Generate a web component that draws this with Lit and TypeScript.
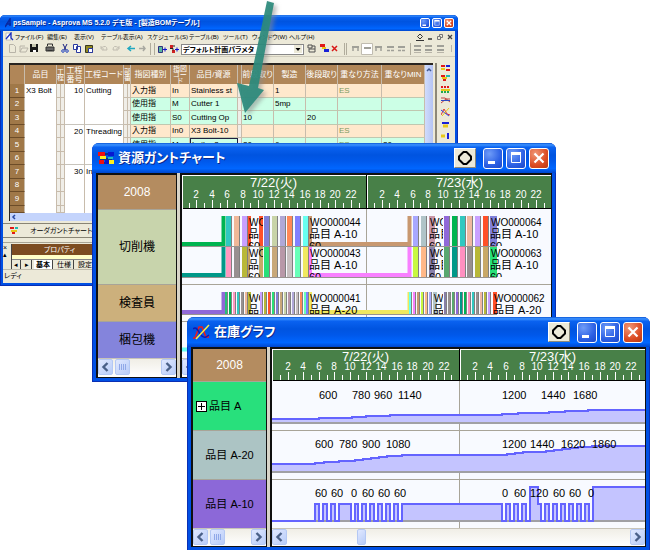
import { LitElement, html, svg, css, nothing } from "lit";
import { customElement, property } from "lit/decorators.js";
import { classMap } from "lit/directives/class-map.js";
import { styleMap } from "lit/directives/style-map.js";

const controls = css`
  button {
    font: inherit;
    padding: 0;
    margin: 0;
    border: 0;
    background: none;
    display: grid;
    place-items: center;
    box-sizing: border-box;
  }
`;

/** Top-level window with a blue caption bar. */
@customElement("xp-window")
class XpWindow extends LitElement {
  @property() caption = "";
  @property({ type: Boolean, reflect: true }) small = false;

  static styles = [
    controls,
    css`
      :host {
        display: block;
        box-sizing: border-box;
        padding: 0 4px 4px;
        border-radius: 7px 7px 0 0;
        background: #0050e4;
        box-shadow: inset 1px -1px 0 #0a2fb4, inset -1px 0 0 #0a2fb4;
      }
      :host([small]) {
        padding: 0 3px 3px;
        border-radius: 5px 5px 0 0;
      }
      .caption {
        display: flex;
        align-items: center;
        gap: 3px;
        height: 30px;
        margin: 0 -4px;
        padding: 0 7px 0 6px;
        border-radius: 7px 7px 0 0;
        background: linear-gradient(#0a56d6 0, #3c92ff 6%, #0a62f0 14%, #0054e0 40%, #0058ea 60%, #0066ff 85%, #0046cc 100%);
        color: #fff;
      }
      h1 {
        flex: 1;
        min-width: 0;
        margin: 0;
        padding-left: 1px;
        overflow: hidden;
        white-space: nowrap;
        font: bold 13px/18px "Liberation Sans", "Noto Sans CJK JP", sans-serif;
        font-feature-settings: "palt";
        text-shadow: 1px 1px 0 #0a2a8c;
      }
      .btn {
        width: 20px;
        height: 21px;
        border: 1px solid #fff;
        border-radius: 3px;
        background: radial-gradient(circle at 30% 25%, #6f9cf8, #2c60e4 60%, #1c48c8);
      }
      .close {
        background: radial-gradient(circle at 30% 25%, #f09878, #dc4c24 60%, #b83810);
      }
      .dock {
        width: 22px;
        height: 20px;
        margin-right: 4px;
        background: #ece9d8;
        border: 1px solid;
        border-color: #fff #8c8a7c #8c8a7c #fff;
      }
      svg {
        display: block;
      }
      :host([small]) .caption {
        height: 16px;
        margin: 0 -3px;
        padding: 0 4px 0 5px;
        gap: 2px;
        border-radius: 5px 5px 0 0;
      }
      :host([small]) h1 {
        font-size: 7px;
        line-height: 12px;
        padding-left: 0;
      }
      :host([small]) .btn {
        width: 10px;
        height: 10px;
        border-radius: 2px;
      }
      :host([small]) .btn svg {
        width: 8px;
        height: 8px;
      }
    `,
  ];

  render() {
    return html`
      <header class="caption">
        <slot name="icon"></slot>
        <h1>${this.caption}</h1>
        ${this.small
          ? nothing
          : html`<button class="dock" aria-label="Dock">
              <svg width="16" height="16" viewBox="0 0 16 16"><path d="M6.500 2h3L14 6.500v3L9.500 14h-3L2 9.500v-3Z" fill="none" stroke="#000" stroke-width="2" /></svg>
            </button>`}
        <button class="btn" aria-label="Minimize">
          <svg width="16" height="16" viewBox="0 0 16 16"><path d="M3 12.500h7" stroke="#fff" stroke-width="3" /></svg>
        </button>
        <button class="btn" aria-label="Maximize">
          <svg width="16" height="16" viewBox="0 0 16 16"><path d="M3.500 3v9.500h9V3" fill="none" stroke="#fff" /><path d="M3 3.500h10" stroke="#fff" stroke-width="3" /></svg>
        </button>
        <button class="btn close" aria-label="Close">
          <svg width="16" height="16" viewBox="0 0 16 16"><path d="M3.500 3.500l9 9M12.500 3.500l-9 9" stroke="#fff" stroke-width="2.200" /></svg>
        </button>
      </header>
      <slot></slot>
    `;
  }
}

type Bar = [x: number, width: number, color: string];
type Label = [x: number, text: string];
type Point = [x: number, y: number];

/* Work-order bars; x is measured from the left edge of the gantt canvas. */
const wide = (start: number, colors: string[]): Bar[] =>
  colors.map((c, i) => [start + Math.round(i * 7.75), 6, c]);
const thin = (start: number, colors: string[]): Bar[] => colors.map((c, i) => [start + i * 4, 3, c]);

interface Lane {
  y: number;
  height: number;
  lead: string;
  carry: string;
  bars: Bar[];
  tags: { x: number; width: number; fill: Bar[]; order: string; item: string }[];
}

const lanes: Lane[] = [
  {
    y: 7, height: 30, lead: "#00b450", carry: "#c89870",
    bars: [
      ...wide(44, ["#30c8c0", "#f0b898", "#c8a0ff"]),
      ...wide(82, ["#8080d8", "#c8d4a8", "#b0a8d8", "#ff8858", "#8080ff", "#68fff0"]),
      ...wide(231, ["#a8a8ff", "#b0c4c8"]),
      ...wide(262, ["#9068d8", "#00b450", "#30c8c0", "#f0b8a0", "#c8a0ff", "#ff5028"]),
    ],
    tags: [
      { x: 66, width: 15, fill: [[66, 3, "#ff5028"], [77, 4, "#ff5028"]], order: "WO", item: "品" },
      { x: 127, width: 70, fill: [[127, 3, "#c89870"]], order: "WO000044", item: "品目 A-10" },
      { x: 247, width: 14, fill: [[247, 6, "#c898a8"]], order: "WO", item: "品目" },
      { x: 308, width: 62, fill: [[308, 7, "#8080d8"]], order: "WO000064", item: "品目 A-10" },
    ],
  },
  {
    y: 38, height: 30, lead: "#009888", carry: "#f880ff",
    bars: [
      ...wide(44, ["#ff98c0", "#989090", "#b8b838"]),
      ...wide(82, ["#28e078", "#c8a878", "#b898a8", "#c8c0c0", "#68ffb8", "#f0e860"]),
      ...wide(231, ["#c8f840", "#ffb888"]),
      ...wide(262, ["#58a870", "#009888", "#ff90c0", "#989090", "#b8b838", "#c8a868"]),
    ],
    tags: [
      { x: 66, width: 15, fill: [[66, 2, "#c8a868"], [77, 4, "#c8a868"]], order: "WO", item: "品" },
      { x: 127, width: 70, fill: [[127, 3, "#f880ff"]], order: "WO000043", item: "品目 A-10" },
      { x: 247, width: 14, fill: [[247, 6, "#8880a8"]], order: "WO", item: "品目" },
      { x: 308, width: 62, fill: [[308, 7, "#28e078"]], order: "WO000063", item: "品目 A-10" },
    ],
  },
  {
    y: 83, height: 22, lead: "#9068d8", carry: "#f0e860",
    bars: [
      ...thin(43, ["#28c078", "#00b450", "#ff98c0", "#30c8c0", "#989090", "#f0b898"]),
      ...thin(78, ["#c8a0ff", "#b8b838", "#ff5028", "#28e078", "#8080d8", "#c8a878", "#c8d4a8", "#b898a8", "#b0a8d8", "#c8c0c0", "#ff8858", "#68ffb8"]),
      [124, 3, "#8080ff"],
      ...thin(227, ["#68fff0", "#f880ff", "#c89870", "#c8f840", "#ffb888", "#a8a8ff"]),
      ...thin(262, ["#8880a8", "#989090", "#58a870", "#9068d8", "#009888", "#00b450", "#ff90c0", "#30c8c0", "#989090", "#f0b8a0", "#b8b838", "#c8a0ff"]),
    ],
    tags: [
      { x: 66, width: 12, fill: [[66, 3, "#b8b838"]], order: "WO", item: "品" },
      { x: 127, width: 70, fill: [[127, 3, "#f0e860"]], order: "WO000041", item: "品目 A-20" },
      { x: 251, width: 10, fill: [[251, 4, "#b0c4c8"]], order: "WO", item: "品目" },
      { x: 311, width: 60, fill: [[311, 4, "#ff5028"]], order: "WO000062", item: "品目 A-20" },
    ],
  },
];

interface Stock {
  base: number;
  textY: number;
  labels: Label[];
  start: number;
  steps: Point[];
}

const pulses = (from: number, until: number): Point[] => {
  const out: Point[] = [];
  for (let x = from; x < until; x += 8) out.push([x, 123], [x + 4, 140]);
  return out;
};

/* Each step is [x, new level]. */
const stocks: Stock[] = [
  {
    base: 42, textY: 18, start: 38,
    labels: [[47, "600"], [80, "780"], [102, "960"], [126, "1140"], [230, "1200"], [269, "1440"], [301, "1680"]],
    steps: [[47, 37], [80, 36], [94, 35], [118, 34], [230, 33], [246, 32], [277, 31], [293, 30], [316, 29]],
  },
  {
    base: 91, textY: 67, start: 83,
    labels: [[43, "600"], [67, "780"], [90, "900"], [114, "1080"], [230, "1200"], [258, "1440"], [289, "1620"], [320, "1860"]],
    steps: [[43, 82], [52, 81], [67, 80], [83, 79], [91, 78], [99, 77], [107, 76], [115, 75], [130, 74], [235, 73], [243, 72], [251, 71], [274, 70], [282, 69], [290, 68], [298, 67], [306, 66], [320, 65]],
  },
  {
    base: 140, textY: 116, start: 140,
    labels: [[43, "60"], [59, "60"], [79, "0"], [90, "60"], [106, "60"], [122, "60"], [230, "0"], [242, "60"], [258, "120"], [281, "60"], [297, "60"], [316, "0"]],
    steps: [
      ...pulses(43, 67), [67, 123], [79, 140], [83, 123], [86, 140],
      ...pulses(90, 130), [130, 123], [230, 140],
      ...pulses(234, 258), [258, 106], [266, 123], [269, 140],
      ...pulses(273, 321), [321, 106],
    ],
  },
];

const LONG = 1200;

const trace = (s: Stock) =>
  `M-2 ${s.start}` + s.steps.map(([x, y]) => `H${x}V${y}`).join("") + `H${LONG}`;

@customElement("app-root")
class AppRoot extends LitElement {
  static styles = [
    controls,
    css`
      :host {
        display: grid;
        grid-template-columns: minmax(0, 1fr);
        overflow: hidden;
        min-height: 100vh;
        background: #fff;
        font: 12px/14px "Liberation Sans", "Noto Sans CJK JP", sans-serif;
        color: #000;
      }
      svg {
        display: block;
        flex: none;
      }
      .layer {
        grid-area: 1 / 1;
        align-self: start;
      }
      .main {
        margin: 15px 192px 0 0;
      }
      .gantt {
        margin: 143px 94px 0 92px;
      }
      .stock {
        margin: 317px 0 0 187px;
      }
      .arrow {
        margin-left: 230px;
        justify-self: start;
        filter: drop-shadow(3px 3px 2px #8889);
      }

      /* gantt and stock panes */
      .panes {
        display: grid;
        grid-template-columns: 81px minmax(0, 1fr);
        column-gap: 3px;
        background: #d8d4c8;
      }
      .stock .panes {
        grid-template-columns: 76px minmax(0, 1fr);
      }
      .pane {
        overflow: hidden;
        border: solid #101010;
        border-width: 2px 1px 1px 2px;
        background: #f8faff;
      }
      .year,
      .res {
        display: flex;
        align-items: center;
        justify-content: center;
        box-sizing: border-box;
      }
      .year {
        height: 34px;
        background: #b48c60;
        color: #fff;
        font-size: 12px;
      }
      .stock .year {
        height: 32px;
      }
      .res {
        height: 37px;
        gap: 2px;
        border-top: 1px solid #a8a498;
        font-size: 12px;
      }
      .tall {
        height: 75px;
      }
      .item {
        height: 49px;
        font-size: 11px;
      }
      .left {
        justify-content: flex-start;
        padding-left: 3px;
      }
      .expand {
        width: 11px;
        height: 11px;
        border: 1px solid #000;
        background: #fff;
      }
      .axis {
        background: #488048;
        box-shadow: inset 1px 1px 0 #fff, inset 0 -1px 0 #000;
      }
      .day {
        font-size: 13px;
        fill: #fff;
      }
      .hour {
        font-size: 10px;
        fill: #fff;
        text-anchor: middle;
      }
      .num {
        font-size: 11px;
      }
      .order {
        font-size: 10px;
      }
      .scroll {
        display: flex;
        height: 18px;
        box-sizing: border-box;
        border-top: 1px solid #c8c4b8;
        background: linear-gradient(#f0eee6, #fff);
      }
      .gantt .scroll {
        height: 19px;
      }
      .sb,
      .thumb {
        width: 15px;
        height: 16px;
        border: 1px solid #b4c8f4;
        border-radius: 2px;
        background: linear-gradient(135deg, #e0e8ff, #b8ccf8);
      }
      .thumb {
        margin-left: 2px;
      }
      .far {
        width: 9px;
        margin-left: 70px;
      }
      .end {
        margin-left: auto;
      }

      /* main table window */
      .client {
        background: #ece9d8;
        font-size: 8px;
        line-height: 10px;
      }
      .menu {
        display: flex;
        align-items: center;
        height: 11px;
        padding-left: 2px;
        white-space: nowrap;
        font-size: 6px;
        font-feature-settings: "palt";
      }
      .menu ul {
        display: grid;
        grid-template-columns: 32px 27px 27px 46px 42px 34px 29px 37px 30px;
        margin: 0 auto 0 1px;
        padding: 0;
        list-style: none;
      }
      .mdi {
        display: flex;
        gap: 4px;
        padding-right: 2px;
      }
      .tools {
        display: flex;
        align-items: center;
        height: 14px;
        overflow: hidden;
        border-bottom: 1px solid #d0ccbc;
      }
      .tools select {
        flex: none;
        appearance: none;
        box-sizing: border-box;
        width: 123px;
        height: 11px;
        margin: 0;
        padding: 0 1px;
        border: 1px solid #888;
        border-radius: 0;
        background: #fff;
        color: #000;
        font: bold 7px/9px "Liberation Sans", "Noto Sans CJK JP", sans-serif;
        font-feature-settings: "palt";
      }
      .combo {
        display: flex;
        align-items: center;
      }
      .drop {
        margin-left: -10px;
        pointer-events: none;
      }
      .work {
        display: flex;
        padding: 6px 0 2px 6px;
      }
      .sheet {
        flex: 1;
        min-width: 0;
        overflow: hidden;
        border: solid #282420;
        border-width: 2px 0 0 1px;
      }
      .grid {
        display: flex;
        background: #fff;
      }
      .vbar {
        width: 8px;
        margin-left: auto;
        background: linear-gradient(90deg, #d0dcfc, #b4c4f4);
      }
      .vbar svg {
        margin-top: 1px;
      }
      .side {
        width: 14px;
        margin-left: 2px;
        padding-left: 4px;
        border-left: 2px solid #8c8878;
      }
      .hbar {
        display: flex;
        align-items: center;
        height: 8px;
        background: #c4d4fc;
      }
      table {
        flex: none;
        table-layout: fixed;
        width: 415px;
        border-spacing: 0;
      }
      th,
      td {
        box-sizing: border-box;
        padding: 0 1px;
        overflow: hidden;
        white-space: nowrap;
        font-weight: normal;
        text-align: left;
        border-right: 1px solid #c8bcac;
      }
      thead th {
        height: 19px;
        background: #b08658;
        color: #fff;
        text-align: center;
        line-height: 9px;
        padding: 0;
        font-feature-settings: "palt";
      }
      thead .wrap {
        white-space: normal;
        word-break: break-all;
      }
      thead .three {
        font-size: 7px;
        line-height: 6px;
      }
      tbody tr {
        height: 14px;
      }
      tbody tr:nth-child(even) {
        height: 13px;
      }
      tbody tr.cut {
        height: 7px;
        line-height: 6px;
      }
      tbody th {
        background: #a07848;
        color: #fff;
        text-align: center;
        border-bottom: 1px solid #6c4c28;
      }
      .t {
        background: #f0eee8;
        border-bottom: 1px solid #c8bcac;
      }
      .r {
        text-align: right;
      }
      .g {
        border-bottom: 1px solid #c8c4bc;
      }
      .in td.c {
        background: #ffe8cc;
      }
      .use td.c {
        background: #ccffe6;
      }
      td.c {
        border-bottom: 1px solid #c0c8b0;
      }
      td.es {
        color: #7c9860;
      }
      td.sel {
        border: 1px solid #202040;
      }
      .bottomtab {
        display: flex;
        align-items: center;
        gap: 12px;
        height: 13px;
        padding-left: 7px;
        border-top: 1px solid #888474;
        border-bottom: 1px solid #888474;
        font-size: 7px;
        font-feature-settings: "palt";
      }
      .dockrow {
        display: flex;
        margin-top: 4px;
        padding-top: 1px;
        border-top: 1px solid #a8a494;
      }
      .grip {
        width: 8px;
        line-height: 7px;
        font-size: 7px;
      }
      .props {
        flex: 1;
        border-left: 1px solid #444;
      }
      .props h2 {
        height: 11px;
        margin: 0;
        padding-left: 32px;
        background: #7c4c20;
        color: #fff;
        font: 7px/11px "Liberation Sans", "Noto Sans CJK JP", sans-serif;
        font-feature-settings: "palt";
      }
      .value {
        height: 4px;
        background: #ffffc8;
        border-bottom: 1px solid #888;
      }
      .tabs {
        display: flex;
        gap: 2px;
        height: 9px;
        font-size: 7px;
        line-height: 9px;
      }
      .tabs button {
        line-height: 9px;
        padding: 0 2px;
        border-right: 1px solid #444;
      }
      .tabs .on {
        background: #fff;
        font-weight: bold;
      }
      .status {
        height: 13px;
        padding-left: 1px;
        border-top: 1px solid #c0bcac;
        font-size: 7px;
        line-height: 12px;
        font-feature-settings: "palt";
      }
    `,
  ];

  private axis(origin: number, hourWidth: number, height: number) {
    const hours = Array.from({ length: 47 }, (_, i) => i + 1).filter((h) => h !== 24);
    const split = Math.round(origin + 24 * hourWidth);
    return html`<svg class="axis" width="1200" height=${height}>
      ${hours.map((h) => {
        const x = Math.round(origin + h * hourWidth);
        return svg`<path d="M${x + 0.5} ${height - 1}v${h % 2 ? -5 : -8}" stroke="#fff" />
          ${h % 2 ? nothing : svg`<text class="hour" x=${x} y=${height - 11}>${h % 24}</text>`}`;
      })}
      <path d="M${split}.5 0V${height}" stroke="#000" /><path d="M${split + 1}.5 0V${height - 1}" stroke="#fff" />
      <text class="day" x=${Math.round(origin + 9 * hourWidth)} y="12">7/22(火)</text>
      <text class="day" x=${Math.round(origin + 33 * hourWidth)} y="12">7/23(水)</text>
    </svg>`;
  }

  private ganttChart() {
    return html`<svg width="1200" height="149">
      <path d="M184.500 0V149M0 75.500H1200M0 112.500H1200" stroke="#a8a498" />
      ${lanes.map(
        (l) => svg`
        <path d="M-2 ${l.y + l.height - 2}H41.500V${l.y}" fill="none" stroke=${l.lead} stroke-width="4" />
        <path d="M127 ${l.y + l.height - 2}H227.500V${l.y}" fill="none" stroke=${l.carry} stroke-width="4" />
        <path d="M0 ${l.y + l.height + 0.5}H315" stroke="#989490" />
        ${l.bars.map(([x, w, c]) => svg`<rect x=${x} y=${l.y} width=${w} height=${l.height} fill="#808080" /><rect x=${x} y=${l.y} width=${w - 1} height=${l.height} fill=${c} />`)}
        ${l.tags.map(
          (t) => svg`
          ${t.fill.map(([x, w, c]) => svg`<rect x=${x} y=${l.y} width=${w} height=${l.height} fill=${c} />`)}
          <svg x=${t.x} y=${l.y} width=${t.width} height=${l.height} overflow="hidden">
            <text class="order" x="1" y="10">${t.order}</text>
            <text class="num" x="0" y="22">${t.item}</text>
            ${l.height > 25 ? svg`<text class="num" x="0" y="34">60</text>` : nothing}
          </svg>`
        )}`
      )}
      <path d="M0 140.500H60" stroke="#68fff0" stroke-width="4" />
    </svg>`;
  }

  private stockChart() {
    return html`<svg width="1200" height="147">
      <path d="M187.500 0V147M0 49.500H1200M0 98.500H1200" stroke="#a8a498" />
      ${stocks.map(
        (s) => svg`
        <path d="${trace(s)}V${s.base}H-2Z" fill="#c4c4ff" />
        <path d="M0 ${s.base}H1200" stroke="#a0a0a4" stroke-width="2" />
        <path d=${trace(s)} fill="none" stroke="#6464ff" stroke-width="2" />
        ${s.labels.map(([x, t]) => svg`<text class="num" x=${x} y=${s.textY}>${t}</text>`)}`
      )}
    </svg>`;
  }

  private chevron(right = false) {
    return html`<svg width="9" height="10" viewBox="0 0 9 10"><path d=${right ? "M2.500 1l4 4l-4 4" : "M6.500 1l-4 4l4 4"} fill="none" stroke="#4a6088" stroke-width="2.400" /></svg>`;
  }

  private scrollbar(far = false) {
    return html`<div class="scroll">
      <button class="sb" aria-label="Scroll left">${this.chevron()}</button>
      <button class=${classMap({ thumb: true, far })} aria-label="Scroll position">
        ${far ? nothing : html`<svg width="8" height="8"><path d="M.5 1v6M2.500 1v6M4.500 1v6M6.500 1v6" stroke="#90a8e8" /></svg>`}
      </button>
      <button class="sb end" aria-label="Scroll right">${this.chevron(true)}</button>
    </div>`;
  }

  private tableRow(n: number) {
    const rows: Record<number, string[]> = {
      1: ["入力指", "In", "Stainless st", "", "1", "", "ES", ""],
      2: ["使用指", "M", "Cutter 1", "", "5mp", "", "", ""],
      3: ["使用指", "S0", "Cutting Op", "10", "", "20", "", ""],
      4: ["入力指", "In0", "X3 Bolt-10", "", "", "", "ES", ""],
      5: ["使用指", "M", "Lathe 2", "20", "6", "", "ES", "20"],
    };
    const process: Record<number, [string, string]> = { 1: ["10", "Cutting"], 4: ["20", "Threading"], 7: ["30", "Inspection"] };
    const last = n === 3 || n === 6;
    const d = rows[n] ?? ["", "", "", "", "", "", "", ""];
    const [no, code] = process[n] ?? ["", ""];
    return html`<tr class=${classMap({ in: n === 1 || n === 4, use: n < 6 && n !== 1 && n !== 4, cut: n === 10 })}>
      <th scope="row">${n < 10 ? n : ""}</th>
      <td>${n === 1 ? "X3 Bolt" : ""}</td>
      <td class="t"></td><td class="t"></td>
      <td class=${classMap({ r: true, g: last })}>${no}</td>
      <td class=${classMap({ g: last })}>${code}</td>
      <td class="t"></td><td class="t"></td>
      ${d.map((v, i) => html`${i === 3 ? html`<td class="t"></td>` : nothing}<td class=${classMap({ c: true, es: v === "ES", sel: n === 5 && i === 2 })}>${v}</td>`)}
    </tr>`;
  }

  private toolbar() {
    return html`<div class="tools">
      <svg width="178" height="12" viewBox="4 43 178 12" fill="none">
        <path d="M10.500 44.500h4l2 2v6h-6zM21 52l2-4h6l-2 4zM21 52v-6h5" stroke="#b8b4a8" />
        <path d="M31 44h8v8h-8z" fill="#181818" /><path d="M33 44h4v3h-4z" fill="#c8c8b0" /><path d="M34 50h3v2h-3z" fill="#fff" />
        <path d="M47 47h8v4h-8z" fill="#686868" stroke="#303030" /><path d="M48.500 46v-2h5v2M48.500 50.500h5" stroke="#303030" />
        <path d="M64 44l3 6M68 44l-3 6" stroke="#182080" /><circle cx="64" cy="51" r="1.300" stroke="#2848c0" /><circle cx="68" cy="51" r="1.300" stroke="#2848c0" />
        <path d="M74.500 44.500h4v5h-4zM77.500 46.500h4v6h-4z" fill="#fff" stroke="#2838a0" />
        <path d="M86.500 45.500h7v7h-7z" fill="#908820" stroke="#383820" /><path d="M89.500 48.500h4v4h-4z" fill="#fff" stroke="#2838a0" />
        <path d="M102 46v3h3M102 48q6-4 6 2h-5M120 46v3h-3M120 48q-6-4-6 2h5" stroke="#c0bcb0" />
        <path d="M129 48.500h7M132 46l-3 2.500l3 2.500" stroke="#20a8c0" stroke-width="1.500" />
        <path d="M140 48.500h6M144 46l2 2.500l-2 2.500" stroke="#a8a8a0" stroke-width="1.500" />
        <path d="M151.500 43v12M155.500 43v12" stroke="#b0ac9c" />
        <path d="M159.500 46.500h4v6h-4z" fill="#58b8a0" stroke="#303080" /><path d="M164 49.500h4M166 47.500v4" stroke="#1010d0" />
        <path d="M171 45h3v3h-3zM173 50h3v3h-3z" fill="#d02020" /><path d="M171 48.500h3v2M174 46h2" stroke="#202020" /><path d="M176 49.500h4M178 47.500v4" stroke="#1010d0" />
      </svg>
      <label class="combo">
        <select aria-label="計画パラメタ"><option>デフォルト計画パラメタ</option></select>
        <svg class="drop" width="8" height="8"><path d="M0 0h8v8H0z" fill="#ece9d8" /><path d="M1.500 3h5l-2.500 3z" fill="#000" /></svg>
      </label>
      <svg width="150" height="12" viewBox="305 43 150 12" fill="none">
        <path d="M311 45h4v3h-4zM315 46h3v6h-6v-3h6" stroke="#505050" />
        <path d="M323 44h5v3h-5z" fill="#e01818" /><path d="M325 47h4v2h-4z" fill="#e8c818" /><path d="M327 49h5v3h-5z" fill="#1820d8" />
        <path d="M335 46l5 5M340 46l-5 5" stroke="#d81818" stroke-width="1.500" />
        <path d="M347.500 43v12M349.500 43v12M413.500 43v12" stroke="#b0ac9c" />
        <path d="M364.500 43.500h11v11h-11z" fill="#fff" stroke="#c0bcb0" />
        <g stroke="#a0a098" stroke-width="2">
          <path d="M355 47h7M367 48h7M378 47h7M390 47h7M401 47h7" /><path d="M417 46h7M428 46h7M440 46h7M417 50h7M428 50h7M440 50h7" />
          <path d="M356 51v-3M361 51v-3M379 51v-3M384 51v-3M390 50.500h3M394 50.500h3M401 50.500h3M405 50.500h3" stroke-width="1.500" />
        </g>
        <path d="M417 52.500h7M428 52.500h7M440 52.500h7M454.500 45v7" stroke="#b8b4a8" />
      </svg>
    </div>`;
  }

  private mainWindow() {
    const menu = ["ファイル(F)", "編集(E)", "表示(V)", "テーブル表示(A)", "スケジュール(S)", "テーブル(B)", "ツール(T)", "ウィンドウ(W)", "ヘルプ(H)"];
    const widths = [15, 32, 4, 4, 20, 39, 4, 3, 40, 19, 48, 4, 32, 32, 32, 44, 43];
    return html`<xp-window small class="layer main" caption="psSample - Asprova MS 5.2.0 デモ版 - [製造BOMテーブル]">
      <svg slot="icon" width="6" height="10"><path d="M0 9L5 1V8M1 6h5" stroke="#0828a0" stroke-width="1.500" fill="none" /></svg>
      <div class="client">
        <nav class="menu">
          <svg width="9" height="9"><path d="M1 1h5v7H1z" fill="#fff" stroke="#bbb" /><path d="M1 7L6 1v5l2 2" fill="none" stroke="#2030c0" stroke-width="1.300" /></svg>
          <ul>${menu.map((m) => html`<li>${m}</li>`)}</ul>
          <div class="mdi">
            <button aria-label="Dock"><svg width="8" height="8"><path d="M4 1l2.500 2.500L4 6L1.500 3.500zM0 7.500h8" fill="none" stroke="#333" /></svg></button>
            <button aria-label="Minimize"><svg width="5" height="8"><path d="M0 6h4" stroke="#333" stroke-width="1.500" /></svg></button>
            <button aria-label="Restore"><svg width="6" height="8"><path d="M2.500 3V1.500h3v3H4M.5 3.500h3v3h-3z" fill="none" stroke="#777" /></svg></button>
            <button aria-label="Close"><svg width="6" height="8"><path d="M1 2l4 4M5 2l-4 4" stroke="#444" stroke-width="1.300" /></svg></button>
          </div>
        </nav>
        ${this.toolbar()}
        <div class="work">
          <div class="sheet">
            <div class="grid">
              <table>
                <colgroup>${widths.map((w) => html`<col style=${styleMap({ width: `${w}px` })} />`)}</colgroup>
                <thead>
                  <tr>
                    <th></th><th>品目</th><th class="wrap three" colspan="2">工程</th><th class="wrap">工程番号</th><th>工程コード</th><th class="wrap three" colspan="2">部番</th>
                    <th>指図種別</th><th class="wrap three">指図コード</th><th>品目/資源</th><th></th><th>前段取り</th><th>製造</th><th>後段取り</th><th>重なり方法</th><th>重なりMIN</th>
                  </tr>
                </thead>
                <tbody>${[1, 2, 3, 4, 5, 6, 7, 8, 9, 10].map((n) => this.tableRow(n))}</tbody>
              </table>
              <div class="vbar"><svg width="8" height="6"><path d="M2 5l2-2l2 2" fill="none" stroke="#405890" stroke-width="1.500" /></svg></div>
            </div>
            <div class="hbar"><svg width="8" height="8"><path d="M5 2L3 4l2 2" fill="none" stroke="#2848a0" stroke-width="1.500" /></svg></div>
          </div>
          <div class="side">
            <svg width="10" height="84" viewBox="444 62 10 84" fill="none" stroke-width="2">
              <path d="M444 65h4M449 69h4" stroke="#e01818" /><path d="M449 65h4" stroke="#1820d8" /><path d="M444 68h4" stroke="#e8c818" />
              <path d="M444 75h4M446 79h3" stroke="#e01818" /><path d="M449 75h4" stroke="#20b8b0" /><path d="M445 77h5" stroke="#e8c818" />
              <path d="M444 86h9" stroke="#e01818" stroke-dasharray="2 1" /><path d="M444 89h9" stroke="#e8c818" /><path d="M444 91h9" stroke="#20a850" stroke-dasharray="2 1" />
              <path d="M444 97h4l5 4M444 102l5-4h4" stroke="#c04040" stroke-width="1" /><path d="M444 99.500h9" stroke="#3048c0" stroke-width="1" />
              <path d="M444 114l3-6l3 5l3 1" stroke="#e03030" stroke-width="1" /><path d="M444 109l8 6" stroke="#3048e0" stroke-width="1" /><path d="M445 115l7-8" stroke="#e8c818" stroke-width="1" />
              <path d="M445 122h7" stroke="#1820d8" /><path d="M446 125h5" stroke="#e8c818" stroke-width="3" />
              <path d="M444 135h4" stroke="#e8c818" stroke-width="3" /><path d="M451 132v6" stroke="#1820d8" />
            </svg>
          </div>
        </div>
        <div class="bottomtab">
          <svg width="8" height="8"><path d="M0 1h4M2 6h3" stroke="#e01818" stroke-width="2" /><path d="M5 1h3" stroke="#20b8b0" stroke-width="2" /><path d="M1 4h6" stroke="#e8c818" stroke-width="2" /></svg>
          <span>オーダガントチャート</span>
        </div>
        <div class="dockrow">
          <div class="grip">×<br />▴</div>
          <div class="props">
            <h2>プロパティ</h2>
            <div class="value"></div>
            <div class="tabs"><button>◂</button><button>▸</button><button class="on">基本</button><button>仕様</button><button>設定</button></div>
          </div>
        </div>
        <div class="status">レディ</div>
      </div>
    </xp-window>`;
  }

  render() {
    const bg = (background: string) => styleMap({ background });
    return html`
      ${this.mainWindow()}
      <svg class="layer arrow" width="44" height="120" viewBox="230 0 44 120"><path d="M267 1L274 3L258 88L264 90L245 113L237 83L249 86Z" fill="#2c8a7c" fill-opacity=".93" /></svg>
      <xp-window class="layer gantt" caption="資源ガントチャート">
        <svg slot="icon" width="16" height="13">
          <path d="M2 2h12M2 7h12M4 11h10" stroke="#101030" />
          <path d="M0 0h7v4H0zM1 8h5v4H1z" fill="#f01010" /><path d="M10 0h6v4h-6zM7 8h4v4H7z" fill="#0818d0" /><path d="M2 4h6v3H2zM11 8h5v4h-5z" fill="#fff020" /><path d="M10 5h5v2h-5z" fill="#20c0c0" />
        </svg>
        <div class="panes">
          <div class="pane">
            <div class="year">2008</div>
            <div class="res tall" style=${bg("#c8d4ac")}>切削機</div>
            <div class="res" style=${bg("#ccb07c")}>検査員</div>
            <div class="res" style=${bg("#8484dc")}>梱包機</div>
            ${this.scrollbar()}
          </div>
          <div class="pane">${this.axis(-1, 7.72, 34)}${this.ganttChart()}${this.scrollbar(true)}</div>
        </div>
      </xp-window>
      <xp-window class="layer stock" caption="在庫グラフ">
        <svg slot="icon" width="17" height="16" fill="none">
          <path d="M0 14h2L6 3h3l4 10h3" stroke="#f01818" stroke-width="1.500" /><path d="M0 5q3-3 6 3t7 5l3-2" stroke="#1018b0" stroke-width="1.500" /><path d="M3 15L16 1" stroke="#fff040" stroke-width="1.500" />
        </svg>
        <div class="panes">
          <div class="pane">
            <div class="year">2008</div>
            <div class="res item left" style=${bg("#28e07c")}>
              <button class="expand" aria-label="Expand"><svg width="9" height="9"><path d="M1 4.500h7M4.500 1v7" stroke="#000" /></svg></button>品目 A
            </div>
            <div class="res item" style=${bg("#acc4c4")}>品目 A-20</div>
            <div class="res item" style=${bg("#8c68d8")}>品目 A-10</div>
            ${this.scrollbar()}
          </div>
          <div class="pane">${this.axis(0, 7.8, 32)}${this.stockChart()}${this.scrollbar(true)}</div>
        </div>
      </xp-window>
    `;
  }
}
